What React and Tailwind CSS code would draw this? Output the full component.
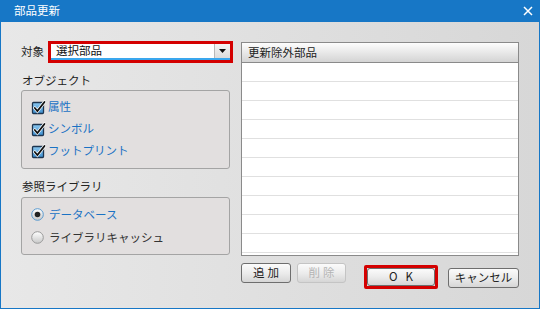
import React from 'react';

const font = { fontFamily: '"Noto Sans CJK JP", "Noto Sans", sans-serif' };

const CheckIcon = () => (
  <svg width="15" height="15" viewBox="0 0 15 15" className="shrink-0">
    <defs>
      <linearGradient id="cbg" x1="0" y1="0" x2="0" y2="1">
        <stop offset="0" stopColor="#8cc8f0" />
        <stop offset="1" stopColor="#3d8fd0" />
      </linearGradient>
    </defs>
    <rect x="1.5" y="2.5" width="11" height="11" rx="1" fill="url(#cbg)" stroke="#1d3550" strokeWidth="1.3" />
    <path d="M3.8 8 L6.4 11 L13.5 2" fill="none" stroke="#ffffff" strokeWidth="3.2" strokeLinecap="round" />
    <path d="M3.8 8 L6.4 11 L13.5 2" fill="none" stroke="#111" strokeWidth="1.8" strokeLinecap="round" />
  </svg>
);

const RadioIcon = ({ checked }) => (
  <svg width="13" height="13" viewBox="0 0 13 13" className="shrink-0">
    <defs>
      <linearGradient id="rbg" x1="0" y1="0" x2="0" y2="1">
        <stop offset="0" stopColor="#ffffff" />
        <stop offset="1" stopColor="#c8c8c8" />
      </linearGradient>
    </defs>
    <circle cx="6.5" cy="6.5" r="5.8" fill="url(#rbg)" stroke={checked ? '#5b9bd0' : '#9a9a9a'} strokeWidth="1" />
    {checked && <circle cx="6.5" cy="6.5" r="2.8" fill="#222" />}
  </svg>
);

const Btn = ({ children, disabled, className = '' }) => (
  <div
    className={`flex items-center justify-center rounded-[3px] border text-[11.5px] bg-gradient-to-b from-[#fbfbfb] via-[#ececec] to-[#d6d6d6] ${
      disabled ? 'border-[#c4c4c4] text-[#b4b4b4]' : 'border-[#6e6e6e] text-[#222]'
    } ${className}`}
  >
    {children}
  </div>
);

export default function App() {
  const rows = Array.from({ length: 10 });

  return (
    <div
      style={font}
      className="w-[540px] h-[309px] flex flex-col bg-[#1777c6] overflow-hidden"
    >
      {/* title bar */}
      <div className="h-[22px] flex items-center justify-between pl-[14px] pr-[7px] text-white text-[11.5px] shrink-0">
        <span className="leading-none">部品更新</span>
        <svg width="10" height="10" viewBox="0 0 10 10">
          <path d="M1 1 L9 9 M9 1 L1 9" stroke="#fff" strokeWidth="1.5" />
        </svg>
      </div>

      {/* body */}
      <div className="flex-1 mx-px mb-px flex bg-gradient-to-r from-[#e8e8e8] to-[#d7d7d7] pl-[20px] pt-[19px] text-[11.5px] text-[#222]">
        {/* left column */}
        <div className="w-[212px] flex flex-col">
          <div className="flex items-center h-[22px]">
            <span className="w-[27px] leading-none">対象</span>
            <div className="w-[185px] h-[22px] border-[3px] border-[#d40000] bg-white flex flex-col">
              <div className="flex-1 flex">
                <div className="flex-1 flex items-center pl-[5px] leading-none text-[#111]">選択部品</div>
                <div className="w-[16px] bg-gradient-to-b from-[#f4f4f4] to-[#dcdcdc] border-l border-[#b8b8b8] flex items-center justify-center">
                  <svg width="7" height="4" viewBox="0 0 7 4">
                    <path d="M0 0 L7 0 L3.5 4 Z" fill="#111" />
                  </svg>
                </div>
              </div>
              <div className="h-[2px] bg-[#3aa7ee]" />
            </div>
          </div>

          <div className="mt-[10px] mb-px h-[16px] flex items-center pl-px">オブジェクト</div>
          <div className="w-[209px] h-[79px] rounded-[3px] border border-[#a4a4a4] bg-[#e2dfdf] pt-[5px] pl-[9px] flex flex-col">
            {['属性', 'シンボル', 'フットプリント'].map((t) => (
              <div key={t} className="h-[22px] flex items-center gap-[2px] text-[#1a72c4]">
                <CheckIcon />
                <span className="leading-none">{t}</span>
              </div>
            ))}
          </div>

          <div className="mt-[10px] mb-[2px] h-[16px] flex items-center pl-px">参照ライブラリ</div>
          <div className="w-[209px] h-[58px] rounded-[3px] border border-[#a4a4a4] bg-[#e2dfdf] pt-[5px] pl-[9px] flex flex-col">
            <div className="h-[23px] flex items-center gap-[5px] text-[#1a72c4]">
              <RadioIcon checked />
              <span className="leading-none">データベース</span>
            </div>
            <div className="h-[23px] flex items-center gap-[5px] text-[#333]">
              <RadioIcon />
              <span className="leading-none">ライブラリキャッシュ</span>
            </div>
          </div>
        </div>

        {/* right column */}
        <div className="ml-[8px] w-[278px] flex flex-col pt-px">
          <div className="h-[214px] border border-[#8a8a8a] bg-white overflow-hidden flex flex-col">
            <div className="h-[20px] shrink-0 flex items-center pl-[6px] border-b border-[#8a8a8a] bg-gradient-to-b from-[#fdfdfd] to-[#d4d4d4] leading-none">
              更新除外部品
            </div>
            {rows.map((_, i) => (
              <div key={i} className="h-[19px] shrink-0 border-b border-[#e0e0e0]" />
            ))}
          </div>

          <div className="flex items-start mt-[7px]">
            <Btn className="w-[50px] h-[20px] tracking-[3px] pl-[3px]">追加</Btn>
            <Btn disabled className="ml-[6px] w-[49px] h-[20px] tracking-[3px] pl-[3px]">削除</Btn>
            <div className="ml-[18px] mt-[2px] w-[74px] h-[24px] border-[3px] border-[#d40000] rounded-[2px]">
              <Btn className="w-full h-full tracking-[8px] pl-[8px] text-[#1a2a5a]">OK</Btn>
            </div>
            <Btn className="ml-[10px] mt-[5px] w-[71px] h-[20px]">キャンセル</Btn>
          </div>
        </div>
      </div>
    </div>
  );
}
